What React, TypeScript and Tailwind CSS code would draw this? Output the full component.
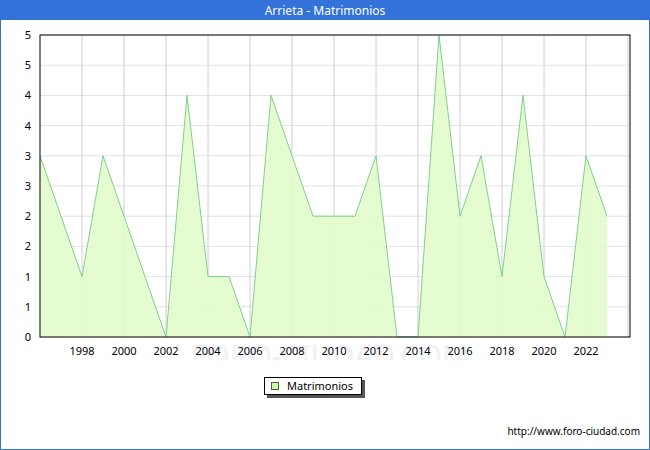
const data=[3,2,1,3,2,1,0,4,1,1,0,4,3,2,2,2,3,0,0,5,2,3,1,4,1,0,3,2];
const X=(i:number)=>40+i*21;
const Y=(v:number)=>337-v*60.4;
export default function App(){
  const pts=data.map((v,i)=>`${X(i)},${Y(v)}`).join(' ');
  const area=`${X(0)},337 ${pts} ${X(data.length-1)},337`;
  const ylab=['0','1','1','2','2','3','3','4','4','5','5'];
  return(<div className="w-[650px] h-[450px] bg-white border border-[#3373d9] flex flex-col font-['DejaVu_Sans',sans-serif]">
    <div className="h-[19px] bg-[#3373d9] text-white text-[12px] flex items-center justify-center shrink-0">Arrieta - Matrimonios</div>
    <svg width="648" height="340" viewBox="1 20 648 340" className="shrink-0">
      <text x="330" y="367" fontSize="30" fill="#f0f0f8" textAnchor="middle">FORO-CIUDAD.COM</text>
      {ylab.map((l,i)=>{const y=337-i*30.2;return <g key={i}><line x1="40" x2="630" y1={y} y2={y} stroke="#e2e2e2"/><text x="31" y={y+4} fontSize="11" textAnchor="end" fill="#000">{l}</text></g>})}
      {Array.from({length:14}).map((_,k)=>{const x=X(2+k*2);return <g key={k}><line x1={x} x2={x} y1="35" y2="337" stroke="#d0d0d0"/>{2+k*2<28&&<text x={x} y="355" fontSize="11" textAnchor="middle">{1996+2+k*2}</text>}</g>})}
      <polygon points={area} fill="#e2fccc" fillOpacity="0.9"/>
      <polyline points={pts} fill="none" stroke="#7fcf8f" strokeWidth="1"/>
      <rect x="40" y="35" width="590" height="302" fill="none" stroke="#000"/>
    </svg>
    <div className="flex justify-center mt-[17px] pr-[24px]">
      <div className="w-[98px] h-[18px] bg-white border border-black shadow-[3px_3px_0_#555] flex items-center gap-[8px] px-[6px] text-[11px]">
        <span className="w-[8px] h-[8px] bg-[#ccff99] border border-[#555]"></span>Matrimonios
      </div>
    </div>
    <div className="mt-auto mb-[10px] pr-[9px] text-right text-[10px]">http://www.foro-ciudad.com</div>
  </div>);
}
